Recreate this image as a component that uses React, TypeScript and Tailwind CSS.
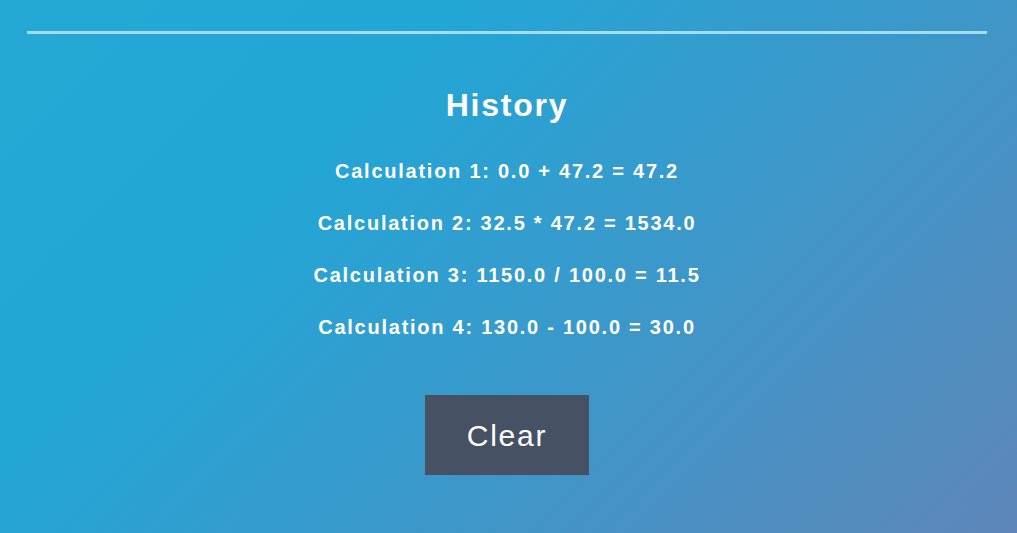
import React from "react";

const items = [
  "Calculation 1: 0.0 + 47.2 = 47.2",
  "Calculation 2: 32.5 * 47.2 = 1534.0",
  "Calculation 3: 1150.0 / 100.0 = 11.5",
  "Calculation 4: 130.0 - 100.0 = 30.0",
];

export default function App() {
  return (
    <div
      className="w-[1017px] h-[533px] overflow-hidden pr-[3px] bg-[linear-gradient(135deg,#24a9d4_0%,#22a6d6_30%,#5e86ba_100%)] text-white flex flex-col items-center tracking-[1.75px]"
      style={{ fontFamily: '"Liberation Sans", Arial, sans-serif' }}
    >
      <div className="mt-[31px] h-[3px] w-[960px] bg-[#a3dcf0]" />
      <h2 className="mt-[51px] text-[32px] leading-[40px] font-bold">History</h2>
      <div className="mt-[35px] flex flex-col items-center gap-[29px]">
        {items.map((t) => (
          <p key={t} className="text-[20px] leading-[23px] font-bold">
            {t}
          </p>
        ))}
      </div>
      <button className="mt-[56px] w-[164px] h-[80px] bg-[#465163] text-white text-[30px] tracking-[1.75px]">
        Clear
      </button>
    </div>
  );
}
